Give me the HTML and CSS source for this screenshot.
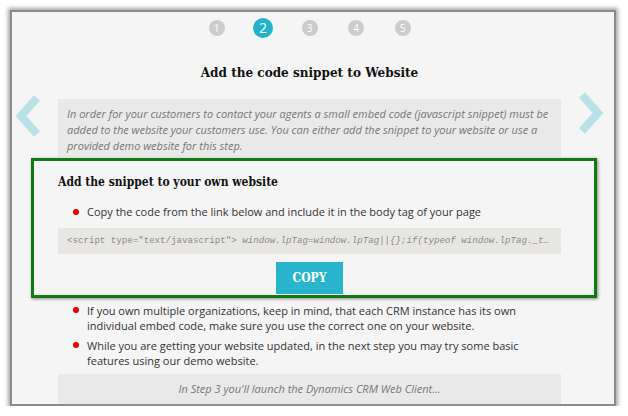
FILE: index.html
```html
<!DOCTYPE html>
<html>
<head>
<meta charset="utf-8">
<link rel="stylesheet" href="styles.css">
</head>
<body>
<div class="frame">
  <a class="nav nav-prev" aria-label="Previous">
    <svg width="28" height="42" viewBox="0 0 28 42"><path d="M22 3 L6 21 L22 39" fill="none" stroke="#b9e1e8" stroke-width="8"/></svg>
  </a>
  <a class="nav nav-next" aria-label="Next">
    <svg width="28" height="42" viewBox="0 0 28 42"><path d="M6 3 L22 21 L6 39" fill="none" stroke="#b9e1e8" stroke-width="8"/></svg>
  </a>
  <div class="column">
    <div class="steps">
      <span class="step"><span class="dot">1</span></span>
      <span class="step"><span class="dot active">2</span></span>
      <span class="step"><span class="dot">3</span></span>
      <span class="step"><span class="dot">4</span></span>
      <span class="step"><span class="dot">5</span></span>
    </div>
    <h1 class="title">Add the code snippet to Website</h1>
    <p class="info">In order for your customers to contact your agents a small embed code (javascript snippet) must be added to the website your customers use. You can either add the snippet to your website or use a provided demo website for this step.</p>
    <section class="highlight">
      <h2 class="subtitle">Add the snippet to your own website</h2>
      <ul class="bullets">
        <li>Copy the code from the link below and include it in the body tag of your page</li>
      </ul>
      <div class="code"><span class="tag">&lt;script type="text/javascript"&gt;</span> <span class="js">window.lpTag=window.lpTag||{};if(typeof window.lpTag._t…</span></div>
      <div class="actions"><button class="copy">COPY</button></div>
    </section>
    <ul class="bullets after">
      <li>If you own multiple organizations, keep in mind, that each CRM instance has its own individual embed code, make sure you use the correct one on your website.</li>
      <li>While you are getting your website updated, in the next step you may try some basic features using our demo website.</li>
    </ul>
    <p class="next">In Step 3 you'll launch the Dynamics CRM Web Client...</p>
  </div>
</div>
</body>
</html>
```
FILE: styles.css
```css
html, body {
  margin: 0;
  padding: 0;
  background: #ffffff;
}
body {
  padding: 10px 12px 0 10px;
  font-family: "Open Sans", "Liberation Sans", sans-serif;
}
.frame {
  position: relative;
  width: 602px;
  height: 392px;
  border: 2px solid #8c8c8c;
  box-shadow: 0 0 4px 2px rgba(0, 0, 0, 0.35);
  background: #f5f5f5;
  overflow: hidden;
}
.nav {
  position: absolute;
  top: 83px;
  display: block;
  line-height: 0;
}
.nav-prev { left: 3px; }
.nav-next { left: 564px; top: 80px; }
.column {
  width: 503px;
  margin-left: 46px;
}
.steps {
  display: flex;
  justify-content: center;
  gap: 26.5px;
  padding-top: 6px;
  height: 20px;
}
.step {
  width: 20px;
  height: 20px;
  display: flex;
  align-items: center;
  justify-content: center;
}
.dot {
  width: 16px;
  height: 16px;
  border-radius: 50%;
  background: #cccccc;
  color: #ffffff;
  font-size: 10px;
  line-height: 16px;
  text-align: center;
}
.dot.active {
  width: 20px;
  height: 20px;
  line-height: 20px;
  background: #22b3cb;
  font-size: 14px;
}
.title {
  margin: 24px 0 0;
  text-align: center;
  font-family: "DejaVu Serif", "Liberation Serif", serif;
  font-stretch: condensed;
  font-weight: bold;
  font-size: 13.4px;
  line-height: 20px;
  color: #111;
}
.info {
  margin: 17px 0 0;
  padding: 7px 8px 3px 9px;
  background: #e9e9e9;
  color: #777;
  font-style: italic;
  font-size: 11px;
  line-height: 16px;
}
.highlight {
  margin: 1px -36px 0 -27px;
  padding: 12px 33px 1px 24px;
  border: 3px solid #0f7a12;
  box-shadow: 1px 1px 3px rgba(0, 0, 0, 0.45);
  background: #f5f5f5;
}
.subtitle {
  margin: 0;
  font-family: "DejaVu Serif", "Liberation Serif", serif;
  font-stretch: condensed;
  font-weight: bold;
  font-size: 12px;
  line-height: 18px;
  color: #111;
}
.bullets {
  list-style: none;
  margin: 12px 0 0;
  padding: 0;
  color: #333;
  font-size: 11px;
  line-height: 18px;
}
.bullets li {
  display: flex;
  align-items: flex-start;
}
.bullets li::before {
  content: "";
  flex: none;
  width: 6px;
  height: 6px;
  border-radius: 50%;
  background: #e60000;
  margin: 6px 8px 0 15px;
}
.bullets.after {
  margin-top: 4.5px;
  line-height: 15px;
}
.bullets.after li + li {
  margin-top: 5px;
}
.bullets.after li::before {
  margin-top: 4.5px;
}
.code {
  margin-top: 7px;
  height: 26px;
  padding: 0 9px;
  background: #e8e6e3;
  color: #8a8a8a;
  font-family: "Liberation Mono", monospace;
  font-size: 9.15px;
  line-height: 26px;
  white-space: nowrap;
  overflow: hidden;
}
.code .js { font-style: italic; }
.actions {
  margin-top: 8px;
  display: flex;
  justify-content: center;
}
.copy {
  width: 67px;
  height: 32px;
  border: 0;
  padding: 0;
  background: #27b4cc;
  color: #ffffff;
  font-family: "DejaVu Serif", "Liberation Serif", serif;
  font-stretch: condensed;
  font-weight: bold;
  font-size: 12px;
}
.next {
  margin: 6.5px 0 0;
  height: 30px;
  background: #e9e9e9;
  color: #777;
  font-style: italic;
  font-size: 11px;
  line-height: 30px;
  text-align: center;
}
```
